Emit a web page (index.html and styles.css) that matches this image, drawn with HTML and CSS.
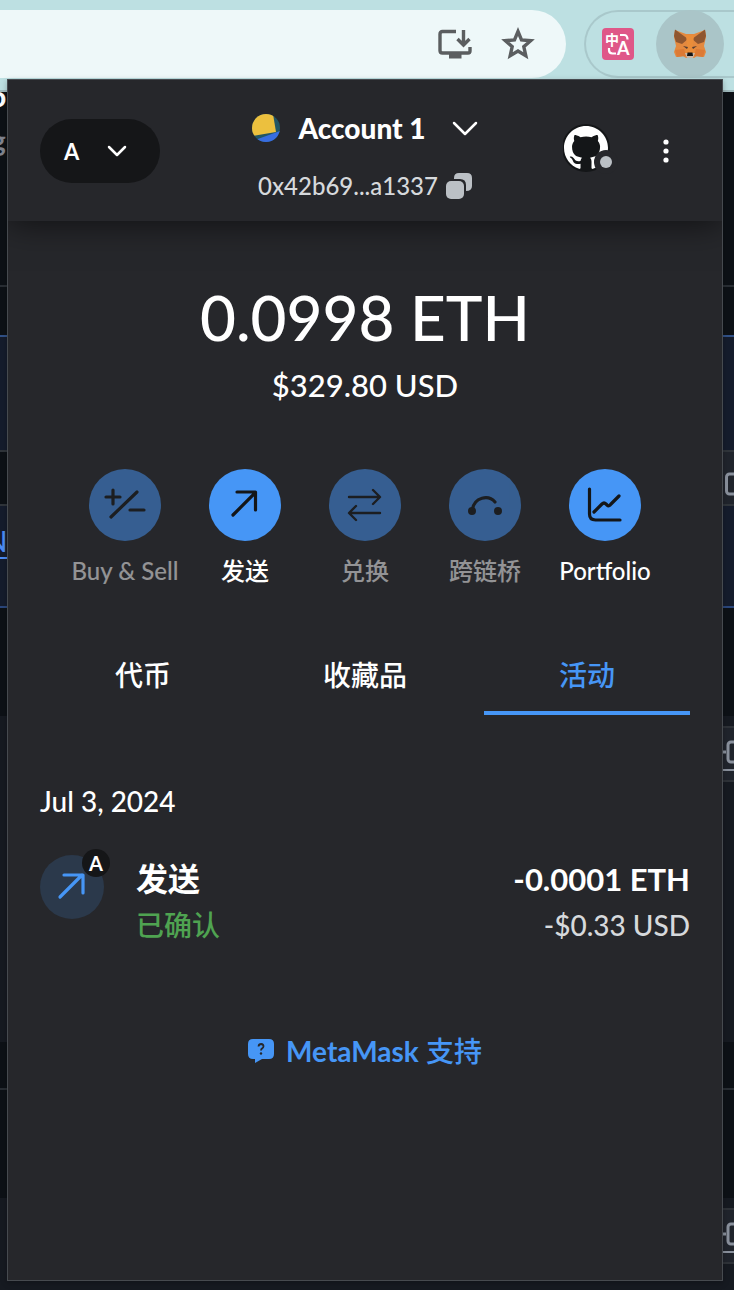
FILE: index.html
```html
<!DOCTYPE html>
<html lang="zh-CN">
<head>
<meta charset="utf-8">
<meta name="viewport" content="width=device-width, initial-scale=1">
<title>MetaMask</title>
<link rel="stylesheet" href="styles.css">
</head>
<body>
<div class="browser">
  <header class="toolbar">
    <div class="omnibox">
      <button class="tool" aria-label="Install app">
        <svg width="36" height="32" viewBox="0 0 36 32" fill="none" stroke="#5b5e60" stroke-width="3.400"><path d="M19 3.500H5.500Q3 3.500 3 6v16.500Q3 25 5.500 25h25.500Q33 25 33 23v-4"/><path d="M12 28h12.500" stroke-width="5"/><path d="M26.500 2v14M20.500 11l6 6 6-6"/></svg>
      </button>
      <button class="tool" aria-label="Bookmark">
        <svg width="34" height="34" viewBox="0 0 34 34" fill="none" stroke="#5b5e60" stroke-width="3.400"><path d="M17 4.500l3.500 8.400 9.200.8-6.900 6 2 9-7.800-4.700-7.800 4.700 2-9-6.900-6 9.200-.8z"/></svg>
      </button>
    </div>
    <div class="extensions">
      <button class="extension" aria-label="Translate">
        <svg width="32" height="32" viewBox="0 0 32 32"><rect width="32" height="32" rx="4" fill="#df5788"/><text x="3" y="17" class="logo-han">中</text><text x="15" y="27" class="logo-latin">A</text><path d="M18 7h4q3.500 0 3.500 4.500M7 20v2q0 3.500 3.500 3.500h3.500" fill="none" stroke="#fff" stroke-width="2.200"/></svg>
      </button>
      <button class="extension active" aria-label="MetaMask">
        <svg width="32" height="32" viewBox="0 0 32 32"><path d="M1 2l11 4h8l11-4 1 7-2 9 2 6-2 5-7-1-3 2h-8l-3-2-7 1-2-5 2-6-2-9z" fill="#e4893f"/><path d="M1 1.500L14 11l-6 5-6-2-2-6zM31 1.500L18 11l6 5 6-2 2-6z" fill="#8f5630"/><path d="M12 7h8l-1 11 2 8H11l2-8z" fill="#ea8d3a"/><path d="M1 22l9-1 2 7-9 1zM31 22l-9-1-2 7 9 1z" fill="#dc7a35"/><path d="M9 18l5 1-1 2zM23 18l-5 1 1 2z" fill="#543c32"/><path d="M11 25h10l-2 5h-6z" fill="#c8b7a7"/><path d="M13.500 24.500h5l.5 3.500h-6z" fill="#151515"/></svg>
      </button>
    </div>
  </header>

  <main class="page" aria-hidden="true">
    <div class="row intro"><b>o</b><i>g</i></div>
    <div class="row gap"></div>
    <div class="row selected"></div>
    <div class="row split"><span class="cell"><svg width="24" height="24" viewBox="0 0 24 24"><rect x="4.500" y="2" width="24" height="20" rx="3"/></svg></span></div>
    <div class="row selected link"><span>N</span></div>
    <div class="row blank"></div>
    <div class="row panel"><span class="cell"><svg width="24" height="24" viewBox="0 0 24 24"><path d="M0 12h4"/><rect x="6" y="2" width="24" height="20" rx="3"/></svg></span></div>
    <div class="row rule"></div>
    <div class="row rest"></div>
    <div class="row panel last"><span class="cell"><svg width="24" height="24" viewBox="0 0 24 24"><path d="M0 12h4"/><rect x="6" y="2" width="24" height="20" rx="3"/></svg></span></div>
  </main>

  <section class="popup" aria-label="MetaMask">
    <header class="wallet-head">
      <button class="network" aria-label="Network">A
        <svg width="20" height="14" viewBox="0 0 20 14"><path d="M2 3l8 8 8-8"/></svg>
      </button>
      <div class="account">
        <button class="account-name">
          <svg width="28" height="28" viewBox="0 0 28 28"><defs><clipPath id="disc"><circle cx="14" cy="14" r="14"/></clipPath></defs><g clip-path="url(#disc)"><path fill="#235664" d="M0 0h28v28H0z"/><path fill="#ecc03e" d="M0 0h21l3 18-24 4z"/><path fill="#386de0" d="M3 26l25-9v11H3z"/></g></svg>
          <span>Account 1</span>
          <svg class="chevron" width="26" height="16" viewBox="0 0 26 16"><path d="M2 3l11 11L24 3"/></svg>
        </button>
        <button class="address"><span>0x42b69...a1337</span>
          <svg width="26" height="26" viewBox="0 0 26 26" fill="#bbc0c5"><path d="M8 5q0-5 5-5h8q5 0 5 5v8q0 5-6 5v-6q0-6-6-6H8z"/><rect y="8" width="18" height="18" rx="5"/></svg>
        </button>
      </div>
      <div class="head-tools">
        <button class="site" aria-label="Connected site">
          <svg width="56" height="54" viewBox="0 0 56 54"><circle cx="23" cy="24" r="24" fill="#141618"/><path fill="#fff" transform="translate(1 2) scale(2.750)" d="M8 0C3.580 0 0 3.580 0 8c0 3.540 2.290 6.530 5.470 7.590.4.070.55-.17.55-.38 0-.19-.01-.82-.01-1.490-2.010.37-2.530-.49-2.690-.94-.09-.23-.48-.94-.82-1.130-.28-.15-.68-.52-.01-.53.63-.01 1.080.58 1.230.82.72 1.210 1.870.87 2.330.66.070-.52.28-.87.51-1.070-1.780-.2-3.640-.89-3.640-3.950 0-.87.31-1.590.82-2.150-.08-.2-.36-1.020.08-2.120 0 0 .67-.21 2.200.82.64-.18 1.320-.27 2-.27s1.360.09 2 .27c1.530-1.040 2.200-.82 2.200-.82.44 1.100.16 1.920.08 2.120.51.56.82 1.270.82 2.150 0 3.070-1.870 3.750-3.650 3.950.29.25.54.73.54 1.480 0 1.070-.01 1.930-.01 2.200 0 .21.15.46.55.38A8.010 8.010 0 0016 8c0-4.420-3.580-8-8-8z"/><circle cx="43" cy="38" r="12" fill="#26272b"/><circle cx="43" cy="38" r="6" fill="#bbc0c5"/></svg>
        </button>
        <button class="menu" aria-label="Menu">
          <svg width="6" height="24" viewBox="0 0 6 24" fill="#fff"><circle cx="3" cy="3" r="2.600"/><circle cx="3" cy="12" r="2.600"/><circle cx="3" cy="21" r="2.600"/></svg>
        </button>
      </div>
    </header>

    <div class="balance">
      <h1>0.0998 ETH</h1>
      <p>$329.80 USD</p>
    </div>

    <nav class="actions">
      <button class="action" disabled><span class="disc"><svg viewBox="0 0 72 72"><path d="M24 21v14M17 28h14M22 48l26-25M41 41h14"/></svg></span>Buy &amp; Sell</button>
      <button class="action"><span class="disc"><svg viewBox="0 0 72 72"><path d="M24 46l22-22M28 23h18.500v18"/></svg></span>发送</button>
      <button class="action" disabled><span class="disc"><svg class="fine" viewBox="0 0 72 72"><path d="M20 28h30M44 21l7 7-7 7M51 44H21M27 37l-7 7 7 7"/></svg></span>兑换</button>
      <button class="action" disabled><span class="disc"><svg viewBox="0 0 72 72"><path d="M23 42c2-15 17-16 23-9"/><circle cx="23" cy="42" r="2.400"/><circle cx="49" cy="42" r="2.400"/></svg></span>跨链桥</button>
      <button class="action"><span class="disc"><svg viewBox="0 0 72 72"><path d="M20.500 20v25q0 6 6 6H51M25 43l8-8q2-2 4 0l1 1q2 2 4-1l8-8"/></svg></span>Portfolio</button>
    </nav>

    <div class="tabs" role="tablist">
      <button role="tab" aria-selected="false">代币</button>
      <button role="tab" aria-selected="false">收藏品</button>
      <button role="tab" aria-selected="true">活动</button>
    </div>

    <section class="activity">
      <h2>Jul 3, 2024</h2>
      <a class="transaction" href="#transaction">
        <span class="tx-icon"><svg width="64" height="64" viewBox="0 0 64 64"><path d="M20 42l22-22M24 20h19v18"/></svg><span class="badge">A</span></span>
        <span class="tx-text"><strong>发送</strong><span class="confirmed">已确认</span></span>
        <span class="tx-text amount"><strong>-0.0001 ETH</strong><span>-$0.33 USD</span></span>
      </a>
    </section>

    <a class="support" href="#support">
      <svg width="26" height="26" viewBox="0 0 26 26"><path fill="#4696f6" d="M5 1h16q5 0 5 5v10q0 5-5 5h-7l-7 4v-4H5q-5 0-5-5V6q0-5 5-5z"/><path fill="none" stroke="#26272b" stroke-width="1.800" d="M10.500 8.500q.3-2.500 2.700-2.500 2.300.2 2.300 2.300 0 1.300-1.300 2.100-1.200.7-1.200 2.100"/><circle cx="13" cy="15.500" r="1.200" fill="#26272b"/></svg>
      <span><b>MetaMask</b> 支持</span>
    </a>
  </section>
</div>
</body>
</html>
```
FILE: styles.css
```css
* { box-sizing: border-box; }

body {
  margin: 0;
  background: #0d1116;
  color: #fff;
  font-family: Lato, "Noto Sans CJK SC", sans-serif;
  font-weight: 500;
}

button {
  margin: 0;
  padding: 0;
  border: 0;
  background: none;
  color: inherit;
  font: inherit;
}

a { color: inherit; text-decoration: none; }
h1, h2, p { margin: 0; font-weight: 500; }
svg { display: block; flex: none; }

.browser {
  position: relative;
  display: flex;
  flex-direction: column;
  min-height: 100vh;
  overflow: hidden;
}

/* Browser toolbar */
.toolbar {
  display: flex;
  gap: 18px;
  height: 92px;
  padding-top: 10px;
  background: #bde0e2;
  border-bottom: 2px solid #9fb9bc;
}

.omnibox {
  display: flex;
  flex: 1;
  justify-content: flex-end;
  align-items: center;
  gap: 28px;
  height: 68px;
  padding-right: 31px;
  border-radius: 0 34px 34px 0;
  background: #eef8f9;
}

.extensions {
  display: flex;
  align-items: center;
  gap: 22px;
  height: 68px;
  padding: 0 10px 0 16px;
  border: 2px solid #a9c8cb;
  border-right: 0;
  border-radius: 34px 0 0 34px;
}

.extension.active {
  display: grid;
  place-items: center;
  width: 68px;
  height: 68px;
  border-radius: 50%;
  background: #aac5c8;
}

.logo-han { fill: #fff; font: 700 14px "Noto Sans CJK SC", sans-serif; }
.logo-latin { fill: #fff; font: 700 18px Lato, sans-serif; }

/* Page behind the popup */
.page {
  display: flex;
  flex: 1;
  flex-direction: column;
}

.row {
  display: flex;
  justify-content: flex-end;
  overflow: hidden;
}

.intro {
  flex-direction: column;
  justify-content: flex-start;
  gap: 20px;
  height: 195px;
  border-bottom: 2px solid #292e34;
  font-size: 28px;
  line-height: 24px;
}
.intro b { margin: -8px 0 0 -10px; font-weight: 900; }
.intro i { margin-left: -9px; color: #80848f; font-style: normal; font-weight: 700; }

.gap { height: 48px; }
.selected { height: 115px; background: #151c2c; border-top: 2px solid #315187; }
.split { height: 56px; border: solid #30353b; border-width: 2px 0; }
.link { justify-content: flex-start; height: 102px; border-top: 0; border-bottom: 2px solid #2b477c; }
.link span { width: 8px; height: 53px; padding-top: 20px; border-bottom: 2px solid #4c8cf5; color: #4c8cf5; font-size: 28px; line-height: 30px; text-indent: -14px; }
.blank { height: 108px; }
.panel { height: 326px; padding-top: 10px; background: #161a21; }
.rule { height: 48px; border-bottom: 2px solid #292e34; }
.rest { height: 108px; }
.last { flex: 1; height: auto; }

.cell {
  width: 12px;
  height: 52px;
  overflow: hidden;
  padding-top: 20px;
  background: #20242c;
}
.cell svg { fill: none; stroke: #8a919d; stroke-width: 3; }
.panel .cell {
  height: 56px;
  padding-top: 12px;
  border: solid #2e3238;
  border-width: 2px 0;
  background: linear-gradient(#8a919d, #8a919d) 0 41px / 100% 2px no-repeat #20242c;
}

/* Wallet popup floats over the page */
.popup {
  position: absolute;
  inset: 79px 11px 9px 7px;
  display: flex;
  flex-direction: column;
  border: 1px solid #464a4f;
  background: #26272b;
  box-shadow: 0 2px 6px #0004;
}

.wallet-head {
  display: grid;
  grid-template-columns: 1fr auto 1fr;
  height: 141px;
  padding: 0 32px;
  box-shadow: 0 2px 32px #0009;
  clip-path: inset(0 0 -60px);
}

.network {
  display: flex;
  align-items: center;
  gap: 28px;
  width: 120px;
  height: 64px;
  margin-top: 39px;
  padding-left: 24px;
  border-radius: 32px;
  background: #151618;
  font-size: 22px;
  font-weight: 700;
}
.network svg, .chevron {
  fill: none;
  stroke: #fff;
  stroke-width: 2.5;
  stroke-linecap: round;
  stroke-linejoin: round;
}

.account {
  display: flex;
  flex-direction: column;
  align-items: center;
  gap: 20px;
  padding-top: 28px;
}
.account-name {
  display: flex;
  align-items: center;
  gap: 18px;
  font-size: 28px;
  font-weight: 900;
  line-height: 40px;
}
.account-name .chevron { margin-left: 8px; }
.address {
  display: flex;
  align-items: center;
  gap: 8px;
  color: #d6d9dc;
  font-size: 24px;
  line-height: 36px;
}

.head-tools {
  display: flex;
  justify-content: flex-end;
  align-items: center;
  gap: 44px;
  padding-right: 21px;
}

.balance { padding-top: 56px; text-align: center; }
.balance h1 { font-size: 62px; line-height: 80px; }
.balance p { margin-top: 8px; font-size: 31px; line-height: 40px; }

.actions {
  display: flex;
  justify-content: center;
  padding-top: 64px;
}
.action {
  display: flex;
  flex-direction: column;
  align-items: center;
  gap: 12px;
  width: 120px;
  font-size: 24px;
  line-height: 36px;
  white-space: nowrap;
}
.action:disabled { opacity: .5; }
.disc { width: 72px; height: 72px; border-radius: 50%; background: #4696f6; }
.disc svg, .tx-icon svg {
  fill: none;
  stroke: #141618;
  stroke-width: 3.2;
  stroke-linecap: round;
  stroke-linejoin: round;
}
.disc circle { fill: #141618; }
.disc .fine { stroke-width: 2.4; }

.tabs {
  display: grid;
  grid-template-columns: repeat(3, 1fr);
  gap: 16px;
  padding: 48px 32px 0;
}
.tabs button {
  height: 78px;
  border-bottom: 4px solid transparent;
  font-size: 28px;
}
.tabs [aria-selected="true"] { border-color: #4696f6; color: #4696f6; }

.activity { padding: 66px 32px 0; }
.activity h2 { font-size: 28px; line-height: 40px; }

.transaction {
  display: flex;
  align-items: flex-start;
  gap: 32px;
  padding-top: 34px;
}
.tx-icon {
  position: relative;
  border-radius: 50%;
  background: #2b394b;
}
.tx-icon svg { stroke: #4696f6; }
.badge {
  position: absolute;
  top: -6px;
  right: -6px;
  width: 28px;
  border-radius: 50%;
  background: #151618;
  font-size: 20px;
  font-weight: 700;
  line-height: 28px;
  text-align: center;
}
.tx-text {
  display: flex;
  flex-direction: column;
  font-size: 28px;
  line-height: 44px;
}
.tx-text strong { font-size: 32px; font-weight: 600; line-height: 48px; }
.confirmed { color: #4fa351; }
.amount { margin-left: auto; color: #d6d9dc; text-align: right; }
.amount strong { color: #fff; font-size: 31px; font-weight: 700; }

.support {
  display: flex;
  align-items: center;
  align-self: center;
  gap: 12px;
  margin-top: 84px;
  color: #4696f6;
  font-size: 28px;
  line-height: 40px;
}
.support b { font-weight: 700; }
```
